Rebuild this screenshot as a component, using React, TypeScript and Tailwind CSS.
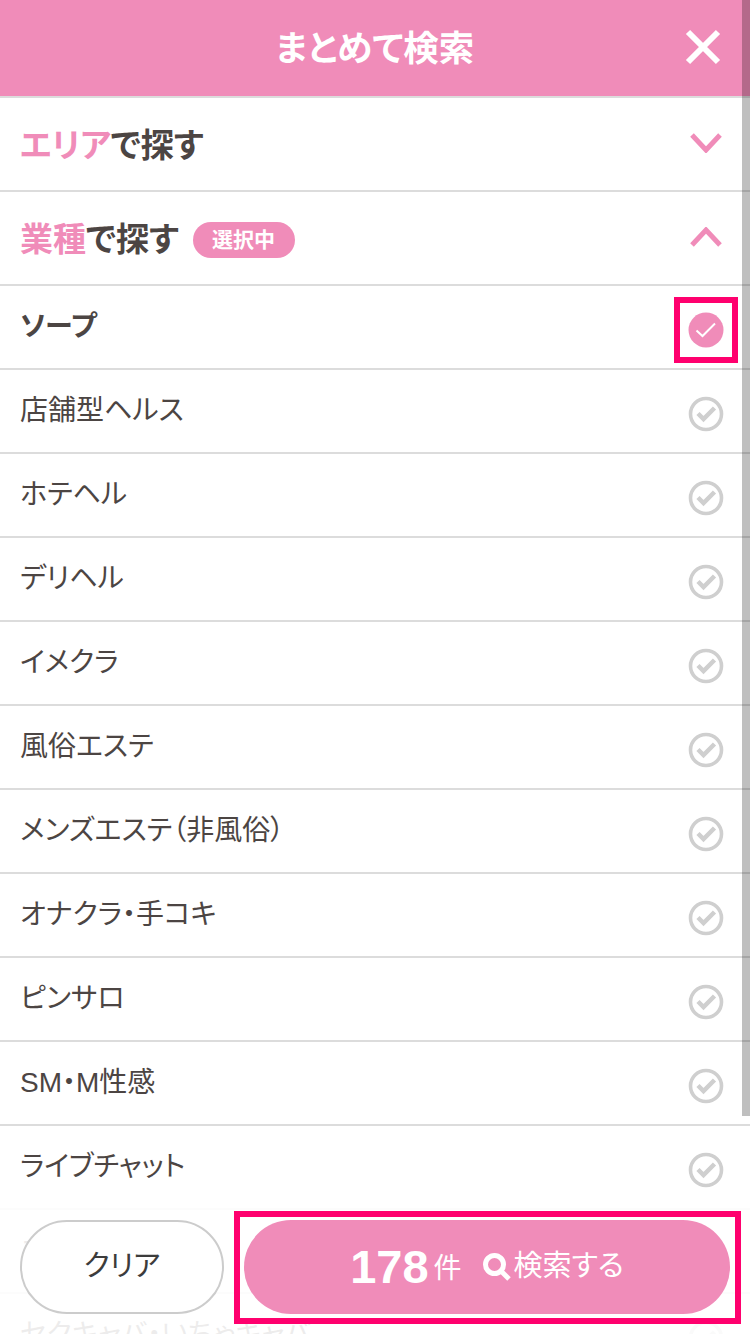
const FONT = "font-['Liberation_Sans','Noto_Sans_CJK_JP',sans-serif]";

const items = [
  "店舗型ヘルス",
  "ホテヘル",
  "デリヘル",
  "イメクラ",
  "風俗エステ",
  "メンズエステ（非風俗）",
  "オナクラ・手コキ",
  "ピンサロ",
  "SM・M性感",
  "ライブチャット",
  "ニューハーフ",
  "セクキャバ・いちゃキャバ",
];

function Check({ on }: { on?: boolean }) {
  if (on) {
    return (
      <svg width="36" height="36" viewBox="0 0 36 36" className="block">
        <circle cx="18" cy="18" r="17.5" fill="#f08cb9" />
        <path d="M8.5 18.5 L14.5 24 L27 11.5" fill="none" stroke="#fff" strokeWidth="2" />
      </svg>
    );
  }
  return (
    <svg width="36" height="36" viewBox="0 0 36 36" className="block">
      <circle cx="18" cy="18" r="15.5" fill="#fff" stroke="#cfcfcf" strokeWidth="3.6" />
      <path d="M10 17.5 L15.5 23 L26.5 12" fill="none" stroke="#cfcfcf" strokeWidth="4.5" />
    </svg>
  );
}

function Chevron({ up }: { up?: boolean }) {
  return (
    <svg width="32" height="20" viewBox="0 0 32 20" className="block">
      <path d={up ? "M2 18 L16 3 L30 18" : "M2 2 L16 17 L30 2"} fill="none" stroke="#f08cb9" strokeWidth="5" />
    </svg>
  );
}

function Row({ label, bold, on }: { label: string; bold?: boolean; on?: boolean }) {
  return (
    <div className="flex h-[84px] items-start justify-between border-b-2 border-[#dcdcdc] pl-5 pr-[26px]">
      <span className={`mt-[21px] text-[28px] leading-[40px] text-[#4c4543] ${bold ? "font-bold" : ""}`}>{label}</span>
      <div className="mt-[26px]"><Check on={on} /></div>
    </div>
  );
}

export default function App() {
  return (
    <div className={`relative h-[1334px] w-[750px] overflow-hidden bg-white [font-feature-settings:'palt'] ${FONT}`}>
      <header className="relative flex h-[98px] items-center justify-center border-b-2 border-[#dcdcdc] bg-[#f08cb9]">
        <h1 className="mt-1 text-[35.5px] font-bold text-white">まとめて検索</h1>
        <svg width="36" height="36" viewBox="0 0 36 36" className="absolute left-[685px] top-[29px]">
          <path d="M3 3 L33 33 M33 3 L3 33" stroke="#fff" strokeWidth="6" />
        </svg>
      </header>

      <div className="flex h-[94px] items-center justify-between border-b-2 border-[#dcdcdc] pl-5 pr-[28px]">
        <h2 className="mt-1 text-[33px] font-bold text-[#4c4543]"><span className="text-[#f08cb9]">エリア</span>で探す</h2>
        <div className="mt-[-2px]"><Chevron /></div>
      </div>

      <div className="flex h-[94px] items-center justify-between border-b-2 border-[#dcdcdc] pl-5 pr-[28px]">
        <div className="mt-1 flex items-center gap-[14px]">
          <h2 className="text-[33px] font-bold text-[#4c4543]"><span className="text-[#f08cb9]">業種</span>で探す</h2>
          <span className="flex h-9 w-[102px] items-center justify-center rounded-full bg-[#f08cb9] text-[21px] font-bold text-white">選択中</span>
        </div>
        <div className="mt-[-3px]"><Chevron up /></div>
      </div>

      <Row label="ソープ" bold on />
      {items.map((t) => (
        <Row key={t} label={t} />
      ))}

      <div className="absolute inset-x-0 bottom-0 flex h-[126px] gap-5 bg-white/90 pl-5 pr-5 pt-3">
        <button className="h-[94px] w-[204px] rounded-full border-2 border-[#cccccc] bg-white text-[29px] text-[#3c3c3c]">クリア</button>
        <button className="flex h-[94px] w-[486px] items-center justify-center rounded-full bg-[#f08cb9] text-white">
          <span className="text-[47px] font-bold">178</span>
          <span className="ml-[5px] mr-[20px] mt-1 text-[28px]">件</span>
          <svg width="30" height="30" viewBox="0 0 30 30" className="mr-[2px]">
            <circle cx="12.5" cy="12.5" r="9" fill="none" stroke="#fff" strokeWidth="5" />
            <path d="M19 19 L27 27" stroke="#fff" strokeWidth="5" />
          </svg>
          <span className="text-[29px]">検索する</span>
        </button>
      </div>

      <div className="absolute left-[674px] top-[297px] h-[66px] w-[64px] border-[6px] border-[#ff006e]" />
      <div className="absolute left-[234px] top-[1211px] h-[113px] w-[507px] border-[6px] border-[#ff006e]" />
      <div className="absolute right-0 top-0 h-[1116px] w-2 bg-black/25" />
    </div>
  );
}
